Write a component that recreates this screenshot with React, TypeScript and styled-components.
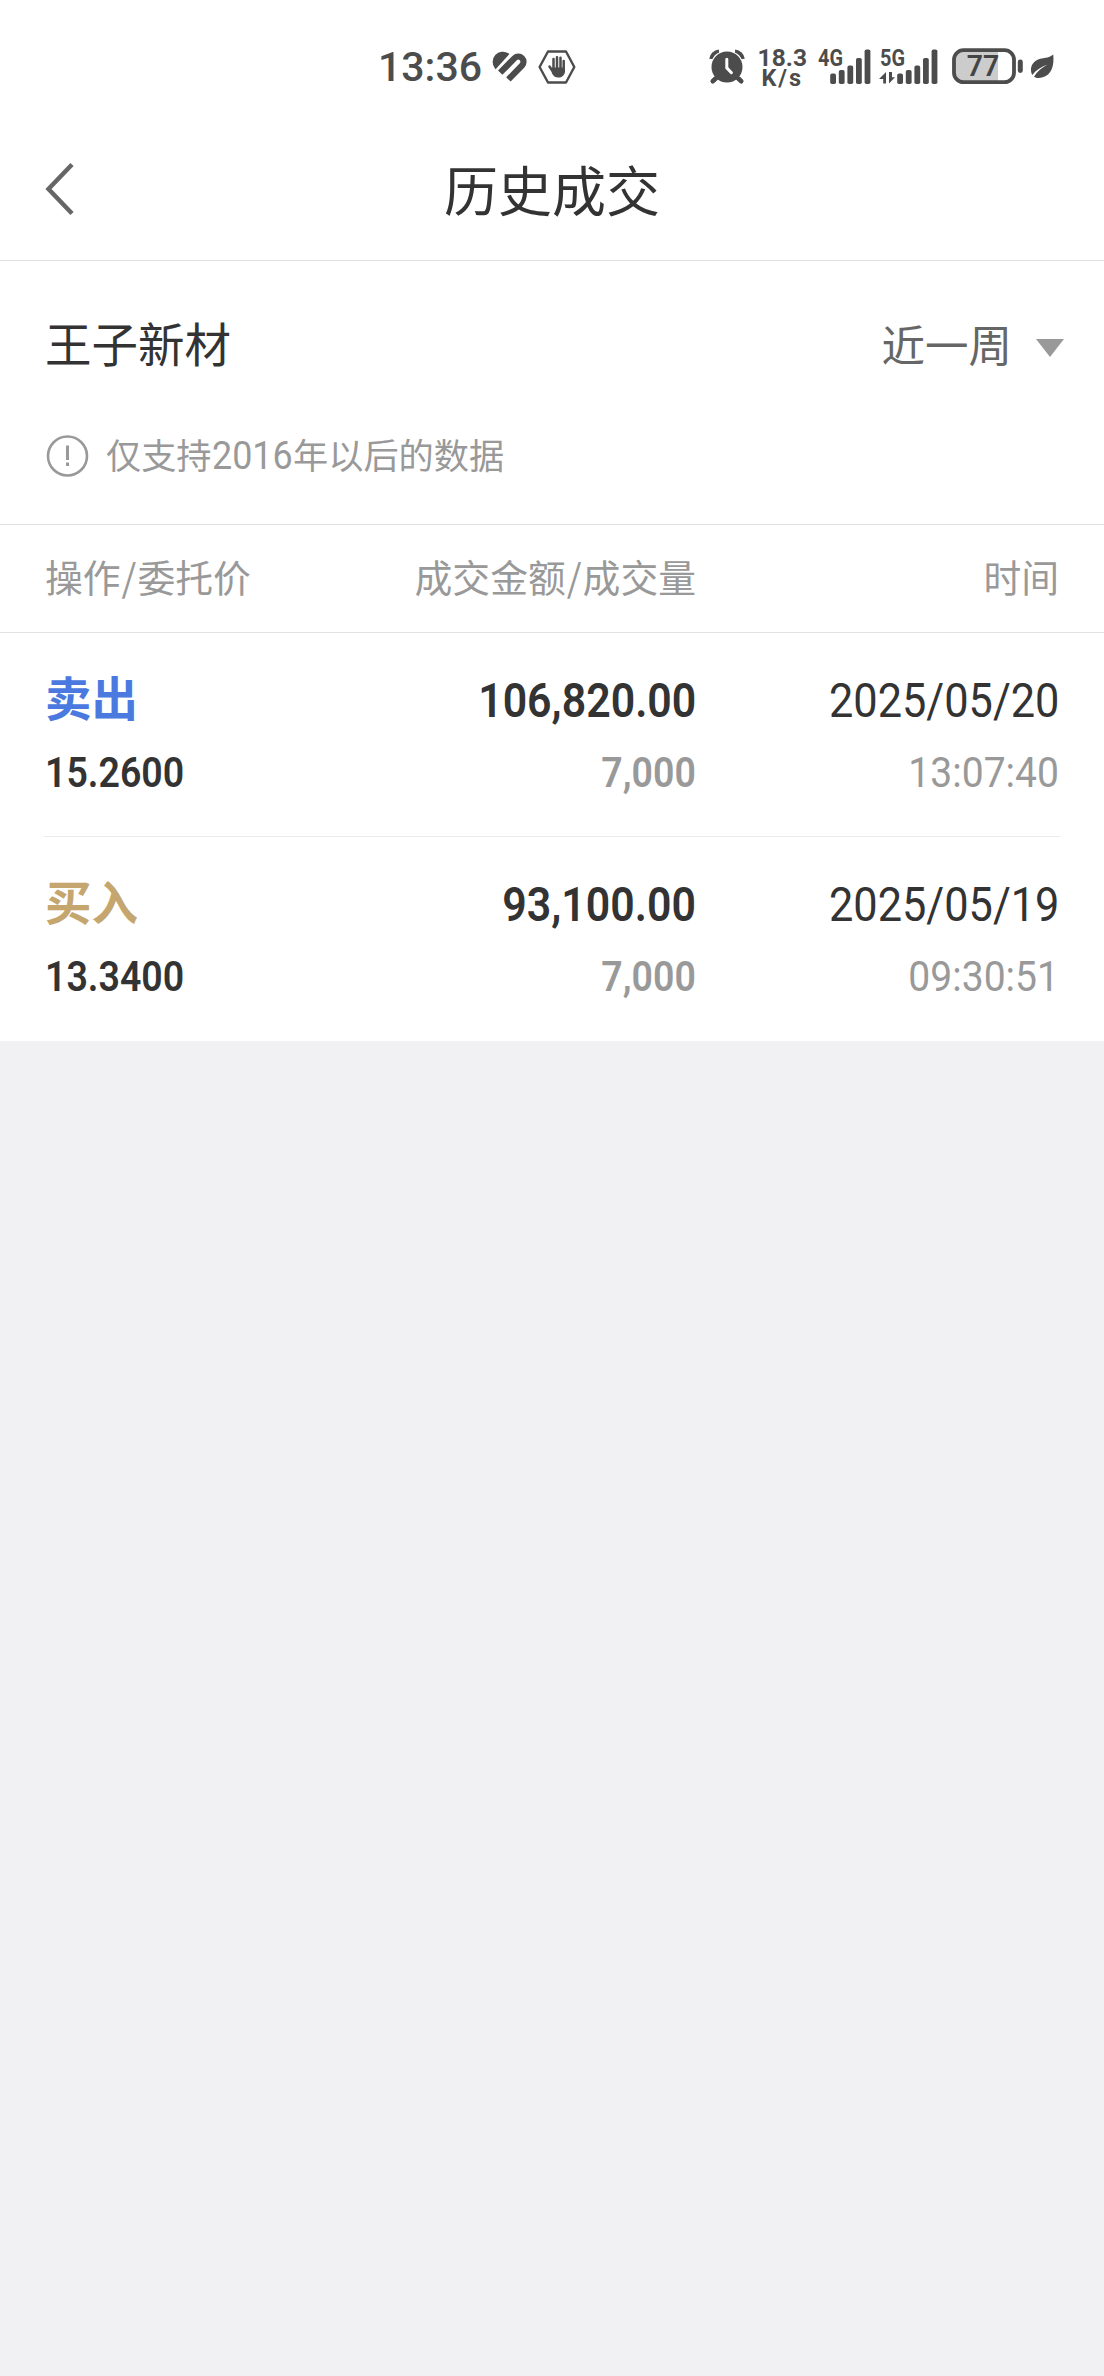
import React from 'react';
import styled, { createGlobalStyle } from 'styled-components';

const CJK = '"Noto Sans CJK SC", sans-serif';
const DIGITS = 'Roboto, "Noto Sans CJK SC", sans-serif';
const INK = '#4c4c4c';
const PAGE = '#f1f1f4';

const GlobalStyle = createGlobalStyle`
  *, *::before, *::after { box-sizing: border-box; }
  body { margin: 0; background: ${PAGE}; }
`;

const Screen = styled.main`
  width: 1104px;
  min-height: 2376px;
  background: ${PAGE};
  font-family: ${CJK};
  color: #333;
`;

const Panel = styled.div`
  background: #fff;
`;

const StatusBar = styled.div`
  display: flex;
  align-items: flex-start;
  justify-content: space-between;
  height: 110px;
  padding: 46px 50px 0 378px;
`;

const StatusGroup = styled.div`
  display: flex;
  align-items: flex-start;
`;

const Clock = styled.span`
  width: 115px;
  font: 500 41px/42px ${DIGITS};
  color: ${INK};
`;

const Glyph = styled.svg<{ $gap?: number; $drop?: number }>`
  display: block;
  flex: none;
  margin-left: ${(p) => p.$gap ?? 0}px;
  margin-top: ${(p) => p.$drop ?? 0}px;
  overflow: visible;
`;

const NavBar = styled.header`
  display: grid;
  grid-template-columns: 120px 1fr 120px;
  align-items: center;
  height: 151px;
  padding: 7px 0 0 44px;
  border-bottom: 1px solid #e2e2e2;
`;

const BackButton = styled.button`
  display: flex;
  width: 60px;
  padding: 0;
  border: 0;
  background: none;
`;

const Title = styled.h1`
  margin: 0 44px 0 0;
  font: 400 54px/80px ${CJK};
  text-align: center;
`;

const Summary = styled.section`
  display: flex;
  flex-direction: column;
  height: 264px;
  padding: 43px 40px 0 45px;
  border-bottom: 1px solid #e2e2e2;
`;

const SummaryLine = styled.div`
  display: flex;
  align-items: center;
  justify-content: space-between;
  height: 76px;
`;

const StockName = styled.h2`
  margin: 0;
  font: 400 46.5px/76px ${CJK};
`;

const Period = styled.button`
  display: flex;
  align-items: center;
  gap: 24px;
  padding: 4px 0 0;
  border: 0;
  background: none;
  color: #666;
  font: 400 43.5px/72px ${CJK};
`;

const Caret = styled.svg`
  display: block;
  margin-top: 7px;
`;

const Notice = styled.p`
  display: flex;
  align-items: center;
  gap: 17px;
  margin: 46px 0 0;
  height: 60px;
  font-size: 35.2px;
  line-height: 56px;
  color: #999;
`;

const NoticeText = styled.span`
  height: 60px;
`;

const Year = styled.span`
  display: inline-block;
  width: 81.5px;
  font: 400 39px/44px ${DIGITS};
  transform: scaleX(0.92);
  transform-origin: left;
  white-space: nowrap;
`;

const Columns = styled.div`
  display: grid;
  grid-template-columns: 300px 351px 1fr;
  padding: 0 45px;
`;

const TableHead = styled(Columns)`
  height: 108px;
  border-bottom: 1px solid #e2e2e2;
  color: #999;
  font-size: 37.8px;
  line-height: 101px;
`;

const HeadCell = styled.span<{ $right?: boolean }>`
  text-align: ${(p) => (p.$right ? 'right' : 'left')};
  white-space: nowrap;
`;

const Slash = styled.i`
  padding: 0 1px;
  font-style: normal;
`;

const Trade = styled(Columns)`
  height: 204px;
  padding-top: 32px;
`;

const Rule = styled.hr`
  height: 1px;
  margin: -1px 44px 0;
  border: 0;
  background: #ebebeb;
`;

const Cell = styled.div<{ $right?: boolean }>`
  display: flex;
  flex-direction: column;
  align-items: ${(p) => (p.$right ? 'flex-end' : 'flex-start')};
`;

const Action = styled.span<{ $color: string }>`
  height: 72px;
  font: 700 46.5px/62px ${CJK};
  color: ${(p) => p.$color};
`;

const Figure = styled.span<{
  $small?: boolean;
  $muted?: boolean;
  $strong?: boolean;
  $left?: boolean;
  $stretch?: number;
}>`
  font-family: ${DIGITS};
  font-size: ${(p) => (p.$small ? 42 : 48)}px;
  font-weight: ${(p) => (p.$strong ? 600 : 400)};
  line-height: 72px;
  color: ${(p) => (p.$muted ? '#999' : '#333')};
  transform: scaleX(${(p) => p.$stretch ?? 0.893});
  transform-origin: ${(p) => (p.$left ? 'left' : 'right')};
  white-space: nowrap;
`;

const HeartIcon = () => (
  <Glyph $drop={6} width="34" height="30" viewBox="0 0 34 30">
    <path d="M2.7 15.8A9.3 9.3 0 0 1 14.9 2.1z" fill={INK} stroke={INK} strokeWidth="2" />
    <path d="M7.2 20.6L21.6 6.1a5.2 5.2 0 0 1 7.4 7.4L15.4 27.4" fill="none" stroke={INK} strokeWidth="6.2" />
    <path d="M11.3 23.7L24.8 9.9" fill="none" stroke="#fff" strokeWidth="2" strokeLinecap="round" />
  </Glyph>
);

const HandIcon = () => (
  <Glyph $gap={11} $drop={4} width="38" height="34" viewBox="0 0 38 34">
    <path d="M10 1.5h18L36.3 17 28 32.5H10L1.6 17z" fill="#fff" stroke={INK} strokeWidth="2.4" strokeLinejoin="round" />
    <g stroke={INK} strokeLinecap="round" strokeWidth="2.5">
      <path d="M15.5 9v12M19 7.2v12M22.500 7.800v12M25.700 11v10M11.500 16.500l4 6" />
    </g>
    <path d="M14.3 17.5H27V21c0 4-3 6.6-6.6 6.6-3.4 0-5-1.5-6.6-4.6z" fill={INK} />
  </Glyph>
);

const AlarmIcon = () => (
  <Glyph $drop={3} width="36" height="35" viewBox="0 0 36 35">
    <g fill="none" stroke={INK}>
      <path d="M2.2 10A8.600 8.600 0 0 1 10 2.400M33.800 10A8.600 8.600 0 0 0 26 2.400" strokeWidth="4" />
      <path d="M8 28l-4.2 4.2M28 28l4.2 4.2" strokeWidth="4.4" strokeLinecap="round" />
    </g>
    <circle cx="18" cy="18" r="16.6" fill="#fff" />
    <path d="M9 27.500l-5.200 4.700M27 27.500l5.200 4.700" stroke={INK} strokeWidth="4.400" strokeLinecap="round" />
    <circle cx="18" cy="18" r="15.500" fill={INK} />
    <path d="M17.8 10.3v8.6l4.6 4.8" fill="none" stroke="#fff" strokeWidth="3" strokeLinecap="round" strokeLinejoin="round" />
  </Glyph>
);

const NetSpeed = () => (
  <Glyph $gap={12} $drop={2} width="52" height="40" viewBox="0 0 52 40">
    <text fill={INK} fontFamily="Roboto, sans-serif" fontWeight="700">
      <tspan x="0.5" y="18.3" fontSize="24.5" textLength="49.5" lengthAdjust="spacing">18.3</tspan>
      <tspan x="4.5" y="38" fontSize="23.5" textLength="39.5" lengthAdjust="spacing">K/s</tspan>
    </text>
  </Glyph>
);

const BAR_TOPS = [25.6, 22, 17.6, 10, 1.5];

const Signal = ({ label, gap, data }: { label: string; gap: number; data?: boolean }) => (
  <Glyph $gap={gap} $drop={2} width="57" height="37" viewBox="0 0 57 37" fill={INK}>
    <text x="0" y="18.4" fontFamily="Roboto, sans-serif" fontWeight="700" fontSize="23.5" textLength="25" lengthAdjust="spacingAndGlyphs">
      {label}
    </text>
    {BAR_TOPS.map((top, i) => (
      <rect key={top} x={(data ? 17.2 : 12.2) + i * 8.6} y={top} width="5.8" height={36 - top} rx="1.8" />
    ))}
    {data && <path d="M6 24v11.500H3.200V31H-1zM9 24v11.500l6-6.300h-3V24z" />}
  </Glyph>
);

const Battery = () => (
  <Glyph $gap={15} $drop={2} width="71" height="37" viewBox="0 0 71 37">
    <path d="M46 3H12a9 9 0 0 0-9 9v13a9 9 0 0 0 9 9h34z" fill="#ccc" />
    <rect x="2" y="2.2" width="60" height="32" rx="9.5" fill="none" stroke={INK} strokeWidth="3.8" />
    <rect x="65.8" y="11.5" width="5" height="13.5" rx="2.4" fill={INK} />
    <text x="14.8" y="28.3" fill="#444" fontFamily="Roboto, sans-serif" fontWeight="600" fontSize="30" textLength="32.5" lengthAdjust="spacingAndGlyphs">
      77
    </text>
  </Glyph>
);

const LeafIcon = () => (
  <Glyph $gap={7} $drop={1} width="24" height="34" viewBox="0 0 24 34">
    <path
      d="M23.3 7.6C24.2 19 22 28 12 30.6c-3.3.9-5.8.5-8-.8 3-5.4 8-9.300 13.500-12.300C11 19.800 5.500 23.400 2.300 28-.5 22.600 1 16 7.600 12.800 12.500 10.600 18.500 11.800 23.300 7.600z"
      fill={INK}
    />
  </Glyph>
);

const trades = [
  { action: '卖出', color: '#4a7ae0', price: '15.2600', amount: '106,820.00', volume: '7,000', date: '2025/05/20', time: '13:07:40' },
  { action: '买入', color: '#c4a66e', price: '13.3400', amount: '93,100.00', volume: '7,000', date: '2025/05/19', time: '09:30:51' },
];

export default function App() {
  return (
    <Screen>
      <GlobalStyle />
      <Panel>
        <StatusBar>
          <StatusGroup>
            <Clock>13:36</Clock>
            <HeartIcon />
            <HandIcon />
          </StatusGroup>
          <StatusGroup>
            <AlarmIcon />
            <NetSpeed />
            <Signal label="4G" gap={9} />
            <Signal label="5G" gap={5} data />
            <Battery />
            <LeafIcon />
          </StatusGroup>
        </StatusBar>

        <NavBar>
          <BackButton aria-label="返回">
            <Glyph width="32" height="54" viewBox="0 0 32 54">
              <path d="M28 2.5L4.5 27 28 51.5" fill="none" stroke="#666" strokeWidth="4.5" />
            </Glyph>
          </BackButton>
          <Title>历史成交</Title>
        </NavBar>

        <Summary>
          <SummaryLine>
            <StockName>王子新材</StockName>
            <Period>
              近一周
              <Caret width="28" height="18" viewBox="0 0 28 18">
                <path d="M0 0h28L14 18z" fill="#999" />
              </Caret>
            </Period>
          </SummaryLine>
          <Notice>
            <Glyph width="44" height="44" viewBox="0 0 44 44">
              <circle cx="22.5" cy="22" r="19.5" fill="none" stroke="#999" strokeWidth="2.6" />
              <path d="M22.5 11.5V26M22.5 28.500v3.500" stroke="#999" strokeWidth="3" />
            </Glyph>
            <NoticeText>
              仅支持<Year>2016</Year>年以后的数据
            </NoticeText>
          </Notice>
        </Summary>

        <TableHead>
          <HeadCell>操作<Slash>/</Slash>委托价</HeadCell>
          <HeadCell $right>成交金额<Slash>/</Slash>成交量</HeadCell>
          <HeadCell $right>时间</HeadCell>
        </TableHead>

        {trades.map((t, i) => (
          <React.Fragment key={t.date}>
            {i > 0 && <Rule />}
            <Trade>
              <Cell>
                <Action $color={t.color}>{t.action}</Action>
                <Figure $small $strong $left>{t.price}</Figure>
              </Cell>
              <Cell $right>
                <Figure $strong>{t.amount}</Figure>
                <Figure $small $strong $muted>{t.volume}</Figure>
              </Cell>
              <Cell $right>
                <Figure $stretch={0.902}>{t.date}</Figure>
                <Figure $small $muted $stretch={0.93}>{t.time}</Figure>
              </Cell>
            </Trade>
          </React.Fragment>
        ))}
      </Panel>
    </Screen>
  );
}
